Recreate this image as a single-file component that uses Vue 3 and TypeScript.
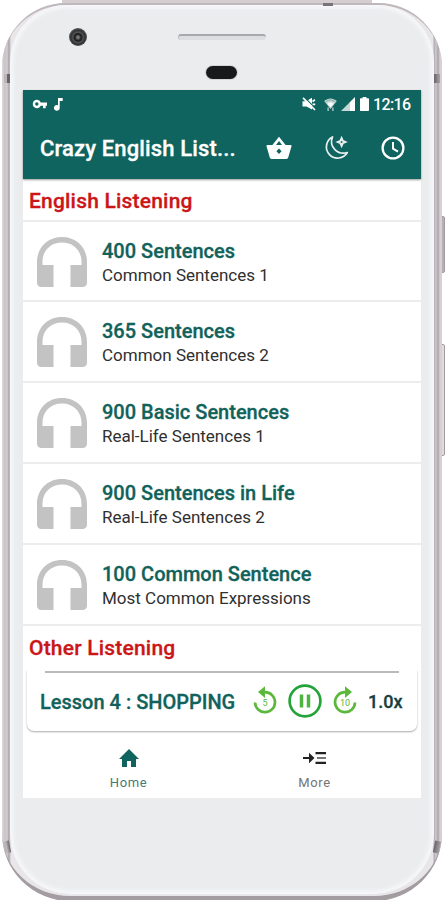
<script setup lang="ts">
interface Lesson {
  title: string
  subtitle: string
}

const lessons: Lesson[] = [
  { title: '400 Sentences', subtitle: 'Common Sentences 1' },
  { title: '365 Sentences', subtitle: 'Common Sentences 2' },
  { title: '900 Basic Sentences', subtitle: 'Real-Life Sentences 1' },
  { title: '900 Sentences in Life', subtitle: 'Real-Life Sentences 2' },
  { title: '100 Common Sentence', subtitle: 'Most Common Expressions' },
]
</script>

<template>
  <div class="stage">
    <div class="top-ridge"></div>
    <div class="side-key power"></div>
    <div class="side-key volume"></div>
    <div class="device">
      <i class="antenna top"></i>
      <i class="antenna upper-left"></i>
      <i class="antenna upper-right"></i>
      <i class="antenna lower-left"></i>
      <i class="antenna lower-right"></i>
      <div class="face">
        <div class="camera"></div>
        <div class="speaker"></div>
        <div class="sensor"></div>
        <main class="screen">
          <header class="header">
            <div class="status">
              <svg class="key" viewBox="0 0 15 10"><path fill-rule="evenodd" d="M5 .7a4.2 4.2 0 1 0 3.8 6H11v2.6h2.7V6.7H15V3.5H8.8A4.2 4.2 0 0 0 5 .7zM4.8 3.3a1.7 1.7 0 1 1 0 3.4 1.7 1.7 0 0 1 0-3.4z" /></svg>
              <svg class="note" viewBox="0 0 9 13"><path d="M4 0h4.700v3H5.700v6.800A2.900 2.900 0 1 1 4 7.300z" /></svg>
              <span class="grow"></span>
              <svg class="mute" viewBox="0 0 14 14"><path d="M.5 4.200h3.600L10 .8v11.800L4.500 9.500h-4z" /><path d="m3 .8 11 11" stroke="#0f645f" stroke-width="1.200" /><path d="m1 .8 12 12.200M10.500 4.500l2.500-1.700M10.500 7.400h2.700" fill="none" stroke="#fff" stroke-width="1.700" /></svg>
              <svg class="wifi" viewBox="0 0 13 13"><path class="dim" d="M.2 3C4-.4 9-.4 12.800 3L6.500 11z" /><path d="m3.500 5.700 3 3.600 3-3.600a5 5 0 0 0-6 0z" /><path d="M1.800 3.800a7.600 7.600 0 0 1 9.400 0" fill="none" stroke="#5f9590" stroke-width=".7" /><path class="dim" d="M3.500 9.500h1.200V13H3.500zM8.300 9.500h1.200V13H8.300z" /></svg>
              <svg class="signal" viewBox="0 0 14 14"><path class="dim" d="M0 14 9 5v9z" /><path d="M9 5l5-5v14H9z" /></svg>
              <svg class="battery" viewBox="0 0 9 14"><path d="M2.600 0h3.800v1.200H8c.6 0 1 .4 1 1V13c0 .6-.4 1-1 1H1c-.6 0-1-.4-1-1V2.200c0-.6.4-1 1-1h1.600z" /></svg>
              <time class="clock">12:16</time>
            </div>
            <div class="toolbar">
              <h1>Crazy English List...</h1>
              <svg class="basket" viewBox="0 0 26 24"><path d="M1.600 9h4.800L13 .8 19.600 9h4.800c.9 0 1.300.6 1.100 1.300l-3.200 11c-.3 1-.9 1.700-2 1.700H5.700c-1.100 0-1.700-.7-2-1.700l-3.200-11C.3 9.600.7 9 1.600 9z" /><path d="M13 5 16 9h-6zM13 12.500l2.600 2.700-2.600 2.700-2.600-2.700z" fill="#0f645f" /></svg>
              <svg class="moon" viewBox="0 0 26 26"><path d="M9.500 1.900A11.200 11.200 0 1 0 24.300 17.500C15 20.500 5.500 12 9.500 1.900z" fill="none" stroke="#e8f1f0" stroke-width="1.700" stroke-linejoin="round" /><path d="m18.600 3.200 1.200 2.600L22.400 7l-2.600 1.200-1.200 2.600-1.200-2.600L14.800 7l2.600-1.200z" fill="none" stroke="#e8f1f0" stroke-width="2" /></svg>
              <svg class="history" viewBox="0 0 24 24"><circle cx="12" cy="12" r="10.400" fill="none" stroke="#fff" stroke-width="2.300" /><path d="M12 6v6.600l5 3" fill="none" stroke="#fff" stroke-width="2" /></svg>
            </div>
          </header>

          <section class="list">
            <h2>English Listening</h2>
            <article v-for="lesson in lessons" :key="lesson.title" class="row">
              <svg class="headphones" viewBox="0 0 50 50"><path d="M0 25C0 10.500 10.500 0 25 0s25 10.500 25 25v20.500c0 2.900-1.800 4.500-4.500 4.500H33.500V28H44.500v-3C44.500 13.500 36.500 5.500 25 5.500S5.500 13.500 5.500 25v3h11v22h-12C1.800 50 0 48.400 0 45.500z" /></svg>
              <div class="copy">
                <h3>{{ lesson.title }}</h3>
                <p>{{ lesson.subtitle }}</p>
              </div>
            </article>
            <h2 class="other">Other Listening</h2>
          </section>

          <section class="player">
            <div class="track"></div>
            <div class="controls">
              <strong class="lesson">Lesson 4 : SHOPPING</strong>
              <svg class="skip back" viewBox="0 0 24 28"><path d="M2 16.500a10 10 0 1 0 10-10.300H9" /><path class="tip" d="M5 6.100 12 .3v11.600z" /><text x="12" y="19.500">5</text></svg>
              <svg class="pause" viewBox="0 0 34 34"><circle cx="17" cy="17" r="15.400" /><path d="M13.500 10.500v13M20.500 10.500v13" /></svg>
              <svg class="skip forward" viewBox="0 0 24 28"><path d="M22 16.500A10 10 0 1 1 12 6.200h3" /><path class="tip" d="m19 6.100-7-5.800v11.600z" /><text x="12" y="19.500">10</text></svg>
              <span class="speed">1.0x</span>
            </div>
          </section>

          <nav class="tabs">
            <a class="tab active">
              <svg class="home" viewBox="0 0 20 18"><path d="M8 18v-6h4v6h5V10h3L10 0 0 10h3v8z" /></svg>
              <span>Home</span>
            </a>
            <a class="tab">
              <svg class="more" viewBox="0 0 23 12"><path d="M0 5.100h6V.7L11.500 6 6 11.300V6.900H0zM12.500 0H23v2.200H12.500zM12.500 9.800H23V12H12.500z" /><path d="M14 5h9v2h-9z" fill="#777" /></svg>
              <span>More</span>
            </a>
          </nav>
        </main>
      </div>
    </div>
  </div>
</template>

<style>
body {
  background: #fff;
  overflow: hidden;
}
</style>

<style scoped>
* {
  box-sizing: border-box;
}
.stage {
  position: relative;
  width: 445px;
  height: 900px;
  padding: 3px 0 0 2px;
  overflow: hidden;
  font-family: Roboto, "Liberation Sans", sans-serif;
}
svg {
  display: block;
  flex: none;
}
h1,
h2,
h3,
p {
  margin: 0;
  white-space: nowrap;
}
h1,
h2,
h3,
.lesson,
.speed {
  -webkit-text-stroke: 0.3px currentColor;
}
.top-ridge {
  position: absolute;
  left: 62px;
  top: 0;
  width: 310px;
  height: 6px;
  background: #d5cdd0;
}
.side-key {
  position: absolute;
  left: 440px;
  width: 5px;
  border: 1px solid #a39da1;
  border-radius: 0 2px 2px 0;
}
.power {
  top: 216px;
  height: 57px;
  background: #b5afb3;
}
.volume {
  top: 344px;
  height: 112px;
  background: #dedddb;
}
.device {
  position: relative;
  width: 440px;
  height: 898px;
  padding: 3px 9px 8px;
  border-radius: 64px 64px 68px 68px;
  background: linear-gradient(90deg, #ded9dc 0, #c8c1c5 3px, #d5cfd3 5px, #aaa4a9 7px, #e8e6e8 9px, #e8e6e8 431px, #b0abb0 432px, #d0cbd0 434px, #aaa4aa 436px, #d8d1d5 438px, #d8cdd2 440px);
}
.device::before {
  content: "";
  position: absolute;
  inset: 0;
  border-radius: inherit;
  border-top: 2px solid #beb7bb;
  border-bottom: 5px solid #a39ca1;
}
.antenna {
  position: absolute;
  z-index: 2;
  background: #77727a;
}
.antenna.top {
  left: 321px;
  top: 0;
  width: 10px;
  height: 3px;
}
.antenna.upper-left {
  left: 2px;
  top: 71px;
  width: 6px;
  height: 9px;
  background: linear-gradient(90deg, #bbb4b8 55%, #68646a 56%);
}
.antenna.upper-right {
  right: 2px;
  top: 71px;
  width: 6px;
  height: 9px;
  background: linear-gradient(90deg, #68646a, #aaa4a9);
}
.antenna.lower-left {
  left: 2px;
  top: 838px;
  width: 6px;
  height: 12px;
  transform: rotate(-12deg);
  background: linear-gradient(90deg, #bbb4b8 45%, #68646a);
}
.antenna.lower-right {
  right: 2px;
  top: 838px;
  width: 6px;
  height: 12px;
  transform: rotate(12deg);
  background: linear-gradient(90deg, #68646a, #aaa4a9);
}
.face {
  position: relative;
  height: 887px;
  padding: 84px 12px 92px;
  border-radius: 56px 56px 60px 60px;
  background: #eaecee;
  box-shadow: inset 0 0 4px 2px #f8f9fb, 0 0 0 1px #f7f6f8;
}
.camera {
  position: absolute;
  left: 58px;
  top: 22px;
  width: 18px;
  height: 18px;
  border-radius: 50%;
  background: radial-gradient(circle at 50% 52%, #777 0 1px, #222 3px 4px, #555 5px, #303234 7px, #55585a 9px);
}
.speaker {
  position: absolute;
  left: 167px;
  top: 28px;
  width: 88px;
  height: 6px;
  border-radius: 3px;
  border-top: 2px solid #a6aaac;
  border-left: 1px solid #b9bdbf;
  background: #dcdfe1;
}
.sensor {
  position: absolute;
  left: 195px;
  top: 60px;
  width: 31px;
  height: 13px;
  border-radius: 7px;
  background: #18191b;
  box-shadow: 0 0 0 1px #d3d5d7;
}
.screen {
  display: grid;
  grid-template-rows: 88.500px 491.500px 62px 66px;
  width: 398px;
  height: 708px;
  background: #fff;
}
.header {
  position: relative;
  background: #0f645f;
  color: #fff;
  box-shadow: 0 1px 2px #0006;
}
.header svg {
  fill: #fff;
}
.status {
  display: flex;
  align-items: center;
  height: 28px;
  padding: 0 11px 0 9px;
}
.header .dim {
  fill: #c5d8d5;
}
.key {
  width: 15px;
  height: 10px;
}
.note {
  width: 9px;
  height: 13px;
  margin-left: 7px;
}
.grow {
  flex: 1;
}
.mute {
  width: 14px;
  height: 14px;
}
.wifi {
  width: 13px;
  height: 13px;
  margin-left: 8px;
}
.signal {
  width: 14px;
  height: 14px;
  margin-left: 4px;
}
.battery {
  width: 9px;
  height: 14px;
  margin: 0 4px 0 5px;
}
.clock {
  width: 37px;
  font-size: 16px;
  font-weight: 500;
  letter-spacing: -0.65px;
  white-space: nowrap;
}
.toolbar {
  display: flex;
  align-items: center;
  height: 60px;
  padding: 0 14px 0 17px;
}
.toolbar h1 {
  width: 226px;
  font-size: 22px;
  font-weight: 500;
  letter-spacing: 0.14px;
}
.basket {
  width: 26px;
  height: 24px;
}
.moon {
  width: 26px;
  height: 26px;
  margin-left: 31px;
}
.history {
  width: 24px;
  height: 24px;
  margin-left: 32px;
}
.list {
  overflow: hidden;
}
.list h2 {
  height: 43px;
  padding-left: 6px;
  border-bottom: 2px solid #ededed;
  color: #cb1517;
  font-size: 21px;
  font-weight: 500;
  letter-spacing: 0.2px;
  line-height: 44px;
}
.list .other {
  border: 0;
}
.row {
  display: flex;
  height: 80.850px;
  padding: 15px 0 0 14px;
  border-bottom: 2px solid #ededed;
}
.headphones {
  width: 50px;
  height: 50px;
  fill: #c3c3c3;
}
.copy {
  margin: 1px 0 0 15px;
}
.copy h3 {
  color: #11625a;
  font-size: 20px;
  font-weight: 500;
  line-height: 26px;
}
.copy p {
  color: #303030;
  font-size: 17px;
  line-height: 23px;
}
.player {
  position: relative;
  width: 390px;
  height: 60.500px;
  margin-left: 4px;
  border-radius: 0 0 7px 7px;
  background: #fff;
  box-shadow: 0 1px 2px #aaa;
  clip-path: inset(0 -4px -4px -4px);
}
.track {
  width: 354px;
  height: 2px;
  margin: 0 auto;
  transform: translateY(1px);
  background: #b8bbbb;
}
.controls {
  display: flex;
  align-items: center;
  height: 59px;
  padding-left: 13px;
}
.lesson {
  width: 213px;
  color: #11625a;
  font-size: 20px;
  font-weight: 500;
  white-space: nowrap;
}
.skip {
  width: 24px;
  height: 28px;
  margin-bottom: 3px;
}
.skip path {
  fill: none;
  stroke: #5bb83a;
  stroke-width: 2.700;
}
.skip .tip {
  fill: #5bb83a;
  stroke: none;
}
.skip text {
  fill: #5bb83a;
  font-size: 9px;
  text-anchor: middle;
}
.pause {
  width: 34px;
  height: 34px;
  margin: 0 11px 2px;
  fill: none;
  stroke: #24a438;
  stroke-width: 2.700;
}
.pause path {
  stroke: #4db441;
  stroke-width: 3.500;
}
.speed {
  margin-left: 11px;
  color: #153e40;
  font-size: 18px;
  font-weight: 500;
}
.tabs {
  display: grid;
  grid-template-columns: 186px 186px;
  padding-left: 12.500px;
}
.tab {
  display: flex;
  flex-direction: column;
  align-items: center;
  padding-top: 17px;
  color: #747474;
  font-size: 13px;
  line-height: 16px;
}
.tab.active {
  color: #467c76;
}
.tab span {
  margin-top: 8px;
  letter-spacing: 0.600px;
}
.home {
  width: 20px;
  height: 18px;
  fill: #0f645f;
}
.more {
  width: 23px;
  height: 12px;
  margin: 3px 0;
  fill: #222;
}
</style>
